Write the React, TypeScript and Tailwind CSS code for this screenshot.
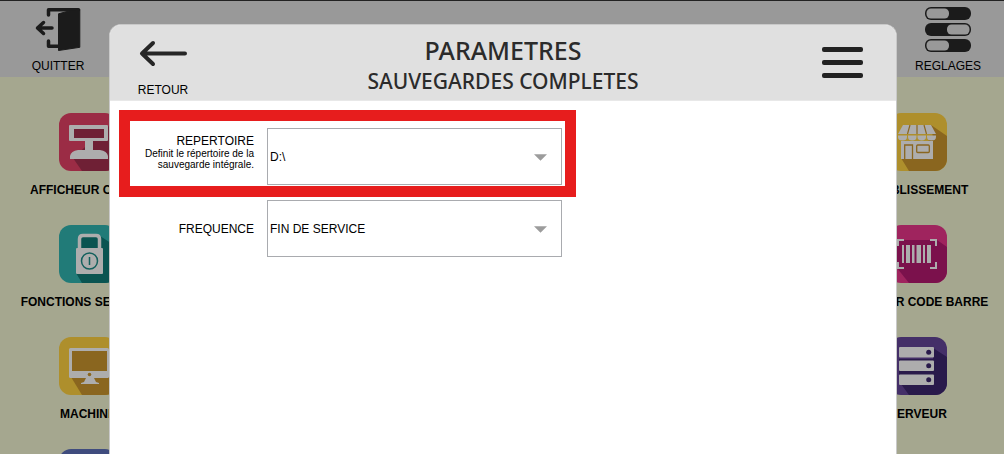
import type { ReactNode } from "react";

type TileProps = {
  label: string;
  base: string;
  shade: string;
  shadow: string;
  children: ReactNode;
};

function Tile({ label, base, shade, shadow, children }: TileProps) {
  return (
    <button type="button" className="flex h-28 flex-col items-center gap-[11px] whitespace-nowrap">
      <svg viewBox="0 0 58 58" className="size-[58px] shrink-0 overflow-hidden rounded-xl" aria-hidden="true">
        <rect width="58" height="58" fill={base} />
        <path d={shadow} fill={shade} />
        {children}
      </svg>
      <span className="text-xs leading-4 font-bold">{label}</span>
    </button>
  );
}

const GREY = "#adadad";

function DisplayTile() {
  return (
    <Tile label="AFFICHEUR CLIENT" base="#9b2c45" shade="#6f2035" shadow="M14 45 L23 58 H58 V20 L49 13Z">
      <rect x="10" y="12" width="39" height="16" rx="1" fill={GREY} />
      <rect x="15" y="16" width="30" height="9" fill="#6f2035" />
      <rect x="26" y="28" width="8" height="10" fill={GREY} />
      <path d="M11 46 V43 Q12 38 19 37 H41 Q48 38 49 43 V46Z" fill={GREY} />
    </Tile>
  );
}

function LockTile() {
  return (
    <Tile label="FONCTIONS SECURITE" base="#217b78" shade="#0a5451" shadow="M17 48 L23 58 H58 V22 L41 11 H22 V30Z">
      <path d="M20.500 24 V14 Q20.500 10.500 24 10.500 H37 Q40.500 10.500 40.500 14 V24" fill="none" stroke={GREY} strokeWidth="3.500" />
      <rect x="17" y="23" width="27" height="26" rx="1" fill={GREY} />
      <circle cx="30.500" cy="36" r="8" fill="none" stroke="#13605d" strokeWidth="1.500" />
      <path d="M30.500 32 V40" stroke="#13605d" strokeWidth="1.500" />
    </Tile>
  );
}

function ComputerTile() {
  return (
    <Tile label="MACHINE" base="#ae8f2c" shade="#8a661f" shadow="M12 40 L23 58 H58 V20 L49 13Z">
      <rect x="10" y="11" width="40" height="30" rx="1.500" fill={GREY} />
      <rect x="13" y="14" width="35" height="20" fill="#8a661f" />
      <circle cx="30.500" cy="37.500" r="1.800" fill="#8a661f" />
      <path d="M27 41 H35 L37 45 L40 46 V47 H22 V46 L25 45Z" fill={GREY} />
    </Tile>
  );
}

function ShopTile() {
  return (
    <Tile label="ETABLISSEMENT" base="#ae8f2c" shade="#8a661f" shadow="M12 45 L20 58 H58 V23 L42 12 L44 25Z">
      <path d="M14 12 H42 L47 21 H9Z" fill={GREY} />
      <path d="M9 22.500 H18 V24 A4.500 3.500 0 0 1 9 24Z M19 22.500 H27.500 V24 A4.250 3.500 0 0 1 19 24Z M28.500 22.500 H37 V24 A4.250 3.500 0 0 1 28.500 24Z M38 22.500 H47 V24 A4.500 3.500 0 0 1 38 24Z" fill={GREY} />
      <path d="M21 12 L18.500 21 M28 12 V21 M35 12 L37.500 21" stroke="#8a661f" strokeWidth="1.200" />
      <path d="M12 28 H44 V46 H12Z" fill={GREY} />
      <path d="M15.700 46 V32 H23.500 V46" fill="none" stroke="#8a661f" strokeWidth="1.300" />
      <rect x="27.700" y="32" width="12.600" height="7.500" rx="1" fill="none" stroke="#8a661f" strokeWidth="1.300" />
    </Tile>
  );
}

function BarcodeTile() {
  return (
    <Tile label="LECTEUR CODE BARRE" base="#9f245e" shade="#7b114c" shadow="M8 15 H48 L58 22 V58 H20 L8 43Z">
      <path d="M9 21 V15 H15 M41 15 H47 V21 M47 37 V43 H41 M15 43 H9 V37" fill="none" stroke={GREY} strokeWidth="2" />
      <path d="M13 20h2v18h-2z M17 20h4v18h-4z M23 20h2.500v18h-2.500z M27.500 20h4.500v18h-4.500z M34 20h2v18h-2z M38 20h4v18h-4z" fill={GREY} />
    </Tile>
  );
}

function ServerTile() {
  return (
    <Tile label="SERVEUR" base="#442f68" shade="#291a4b" shadow="M12 47 L20 58 H58 V20 L44 11 V22 H10 V36Z">
      {[10, 23.5, 37.5].map((y) => (
        <g key={y}>
          <rect x="10" y={y} width="35" height="10.500" rx="1" fill={GREY} />
          <circle cx="39.700" cy={y + 5.3} r="2.500" fill="#291a4b" />
        </g>
      ))}
    </Tile>
  );
}

function ExitIcon() {
  return (
    <svg viewBox="0 0 46 45" className="h-[45px] w-[46px]" fill="none" stroke="#1b1b1b" strokeWidth="3.500" aria-hidden="true">
      <path d="M13.500 8 V2.800 H43.500 M13.500 34 V39.200 H24" strokeLinejoin="round" strokeLinecap="round" />
      <path d="M23.500 6.800 L34 4 L44.800 2.500 V40.300 L23.500 43.500Z" fill="#1b1b1b" strokeWidth="1" strokeLinejoin="round" />
      <path d="M17 21 H2.500 M8.500 15.500 L2.500 21 L8.500 26.500" strokeLinecap="round" strokeLinejoin="round" />
    </svg>
  );
}

function TogglesIcon() {
  return (
    <svg viewBox="0 0 46 45" className="h-[45px] w-[46px]" aria-hidden="true">
      {[0, 16, 32].map((y) => (
        <g key={y}>
          <rect y={y} width="46" height="13" rx="6" fill="#1b1b1b" />
          <rect x={y === 16 ? 22 : 1.5} y={y + 1.5} width="22.500" height="10" rx="4.500" fill="#999" />
        </g>
      ))}
    </svg>
  );
}

function SelectBox({ id, value }: { id: string; value: string }) {
  return (
    <div className="relative h-[57px] w-[295px] shrink-0">
      <select
        id={id}
        defaultValue={value}
        className="size-full appearance-none border border-[#a9abaf] bg-white pl-0.5 text-xs text-black"
      >
        <option>{value}</option>
      </select>
      <svg viewBox="0 0 14 7" className="pointer-events-none absolute top-[26px] right-[15px] h-[7px] w-[13px]" aria-hidden="true">
        <path d="M0 0 H14 L7 7Z" fill="#9c9c9c" />
      </svg>
    </div>
  );
}

export default function App() {
  return (
    <div className="relative h-screen overflow-hidden bg-[#a5a78f] font-['Liberation_Sans',Arial,sans-serif] text-black">
      <header className="flex h-[77px] justify-between border-t border-[#222] bg-[#999] pl-0.5 text-xs">
        <button type="button" className="flex w-28 flex-col items-center gap-1.5 pt-1.5">
          <ExitIcon />
          <span>QUITTER</span>
        </button>
        <button type="button" className="flex w-28 flex-col items-center gap-1.5 pt-1.5">
          <TogglesIcon />
          <span>REGLAGES</span>
        </button>
      </header>

      <div className="flex justify-between pt-9 pl-0.5">
        <div className="flex w-[172px] flex-col">
          <DisplayTile />
          <LockTile />
          <ComputerTile />
          <div className="size-[58px] self-center rounded-xl bg-[#3f4c7e]" />
        </div>
        <div className="flex w-[172px] flex-col">
          <ShopTile />
          <BarcodeTile />
          <ServerTile />
        </div>
      </div>

      <div role="dialog" aria-labelledby="title" className="absolute top-6 right-[107px] bottom-0 left-[109px] flex flex-col overflow-hidden rounded-t-xl border-x border-t border-[#c9c9c9] bg-white">
        <div className="flex h-[76px] shrink-0 justify-between border-b border-[#e8e8e8] bg-[#e0e0e0]">
          <button type="button" className="flex w-[106px] flex-col items-center gap-[15px] pt-[15px] text-xs">
            <svg viewBox="0 0 48 27" className="h-[27px] w-12" fill="none" stroke="#262626" strokeWidth="4" strokeLinecap="round" strokeLinejoin="round" aria-hidden="true">
              <path d="M46 13.500 H3 M14 3 L3 13.500 L14 24" />
            </svg>
            <span>RETOUR</span>
          </button>
          <div className="pt-[9px] text-center font-['Noto_Sans',sans-serif] font-medium text-[#2b2b2b]">
            <h1 id="title" className="text-[25px] leading-8">PARAMETRES</h1>
            <h2 className="text-[21px] leading-[30px]">SAUVEGARDES COMPLETES</h2>
          </div>
          <button type="button" aria-label="Menu" className="flex w-[106px] flex-col items-center gap-2 pt-[22px]">
            <span className="h-[5px] w-[41px] rounded-xs bg-[#222]" />
            <span className="h-[5px] w-[41px] rounded-xs bg-[#222]" />
            <span className="h-[5px] w-[41px] rounded-xs bg-[#222]" />
          </button>
        </div>

        <form className="flex flex-col items-start gap-[3px] pt-[9px] pl-[9px]">
          <div className="flex gap-[13px] border-[11px] border-[#e71d1d] pt-[7px] pr-[3px] pb-px">
            <label htmlFor="directory" className="w-[124px] pt-1.5 text-right text-xs leading-[14px]">
              REPERTOIRE
              <small className="block text-[10px] leading-[11px]">
                Definit le répertoire de la
                <br />
                sauvegarde intégrale.
              </small>
            </label>
            <SelectBox id="directory" value="D:\" />
          </div>
          <div className="flex items-center gap-[13px] pl-[11px]">
            <label htmlFor="frequency" className="w-[124px] text-right text-xs">
              FREQUENCE
            </label>
            <SelectBox id="frequency" value="FIN DE SERVICE" />
          </div>
        </form>
      </div>
    </div>
  );
}
